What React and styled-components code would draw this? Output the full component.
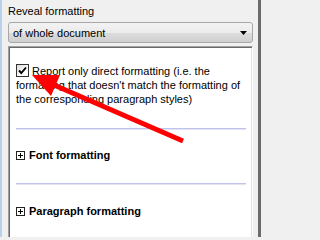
import React from 'react'
import styled, { createGlobalStyle } from 'styled-components'

const GlobalStyle = createGlobalStyle`
  html, body {
    margin: 0;
    padding: 0;
    background: #f0f0f0;
  }
  body {
    font-family: "Liberation Sans", Arial, sans-serif;
    font-size: 11px;
    color: #000;
  }
`

const Window = styled.div`
  position: relative;
  box-sizing: border-box;
  width: 261px;
  height: 237px;
  overflow: hidden;
  display: flex;
  flex-direction: column;
  padding: 4px 5px 0 6px;
  background: #f0f0f0;
  border-left: 2px solid #b9d1ea;
  border-right: 3px solid #6b6b6b;

  & > * {
    flex: none;
  }
`

const Label = styled.div`
  line-height: 14px;
  height: 14px;
  margin-bottom: 4px;
`

const Combo = styled.div`
  box-sizing: border-box;
  height: 21px;
  display: flex;
  align-items: center;
  justify-content: space-between;
  padding: 0 4px 0 4px;
  border: 1px solid #a7a7a7;
  border-radius: 3px;
  background: linear-gradient(to bottom, #f3f3f3 0%, #ebebeb 50%, #dddddd 51%, #cfcfcf 100%);
`

const ComboText = styled.span`
  line-height: 14px;
`

const ComboArrow = styled.svg`
  width: 7px;
  height: 4px;
  margin-right: 1px;
`

const Panel = styled.div`
  box-sizing: border-box;
  margin-top: 3px;
  height: 220px;
  padding: 17px 6px 0 7px;
  background: #fff;
  border: 1px solid;
  border-color: #a0a0a0 #ffffff #ffffff #a0a0a0;
  box-shadow: inset 1px 1px 0 #696969, inset -1px -1px 0 #e3e3e3;
`

const Paragraph = styled.p`
  margin: 0;
  line-height: 14px;
`

const CheckBox = styled.span`
  display: inline-block;
  box-sizing: border-box;
  width: 13px;
  height: 13px;
  margin-right: 3px;
  vertical-align: -2px;
  border: 1px solid #333;
  background: linear-gradient(135deg, #dcdcdc 0%, #ffffff 70%);
  position: relative;
`

const CheckMark = styled.svg`
  position: absolute;
  left: 1px;
  top: 1px;
  width: 9px;
  height: 9px;
`

const Divider = styled.div`
  margin: ${({ $top }) => $top}px 0 ${({ $bottom }) => $bottom}px;
  height: 1px;
  background: #c2c2ef;
  border-bottom: 1px solid #e4e4ee;
`

const Header = styled.div`
  display: flex;
  align-items: center;
  gap: 4px;
  height: 14px;
  line-height: 14px;
  font-weight: bold;
`

const Expander = styled.svg`
  width: 9px;
  height: 9px;
  flex: none;
`

const Arrow = styled.svg`
  position: absolute;
  left: -2px;
  top: 0;
  pointer-events: none;
`

const PlusBox = () => (
  <Expander viewBox="0 0 9 9">
    <rect x="0.5" y="0.5" width="8" height="8" fill="#fff" stroke="#222" />
    <path d="M2 4.5h5M4.5 2v5" stroke="#000" strokeWidth="1" />
  </Expander>
)

const Section = ({ title }) => (
  <Header>
    <PlusBox />
    <span>{title}</span>
  </Header>
)

export default function App() {
  return (
    <>
      <GlobalStyle />
      <Window>
        <Label>Reveal formatting</Label>
        <Combo>
          <ComboText>of whole document</ComboText>
          <ComboArrow viewBox="0 0 7 4">
            <path d="M0 0h7L3.5 4z" fill="#000" />
          </ComboArrow>
        </Combo>
        <Panel>
          <Paragraph>
            <CheckBox>
              <CheckMark viewBox="0 0 9 9">
                <path d="M1 4.5L3.3 7L8 1.5" fill="none" stroke="#000" strokeWidth="1.9" />
              </CheckMark>
            </CheckBox>
            Report only direct formatting (i.e. the formatting that doesn't match the formatting of the corresponding paragraph styles)
          </Paragraph>
          <Divider $top={22} $bottom={18} />
          <Section title="Font formatting" />
          <Divider $top={21} $bottom={19} />
          <Section title="Paragraph formatting" />
        </Panel>
        <Arrow width="261" height="237" viewBox="0 0 261 237">
          <line x1="54" y1="85" x2="183" y2="141" stroke="#ff0000" strokeWidth="5" />
          <polygon points="32,75 60,75 51,96" fill="#ff0000" />
        </Arrow>
      </Window>
    </>
  )
}
